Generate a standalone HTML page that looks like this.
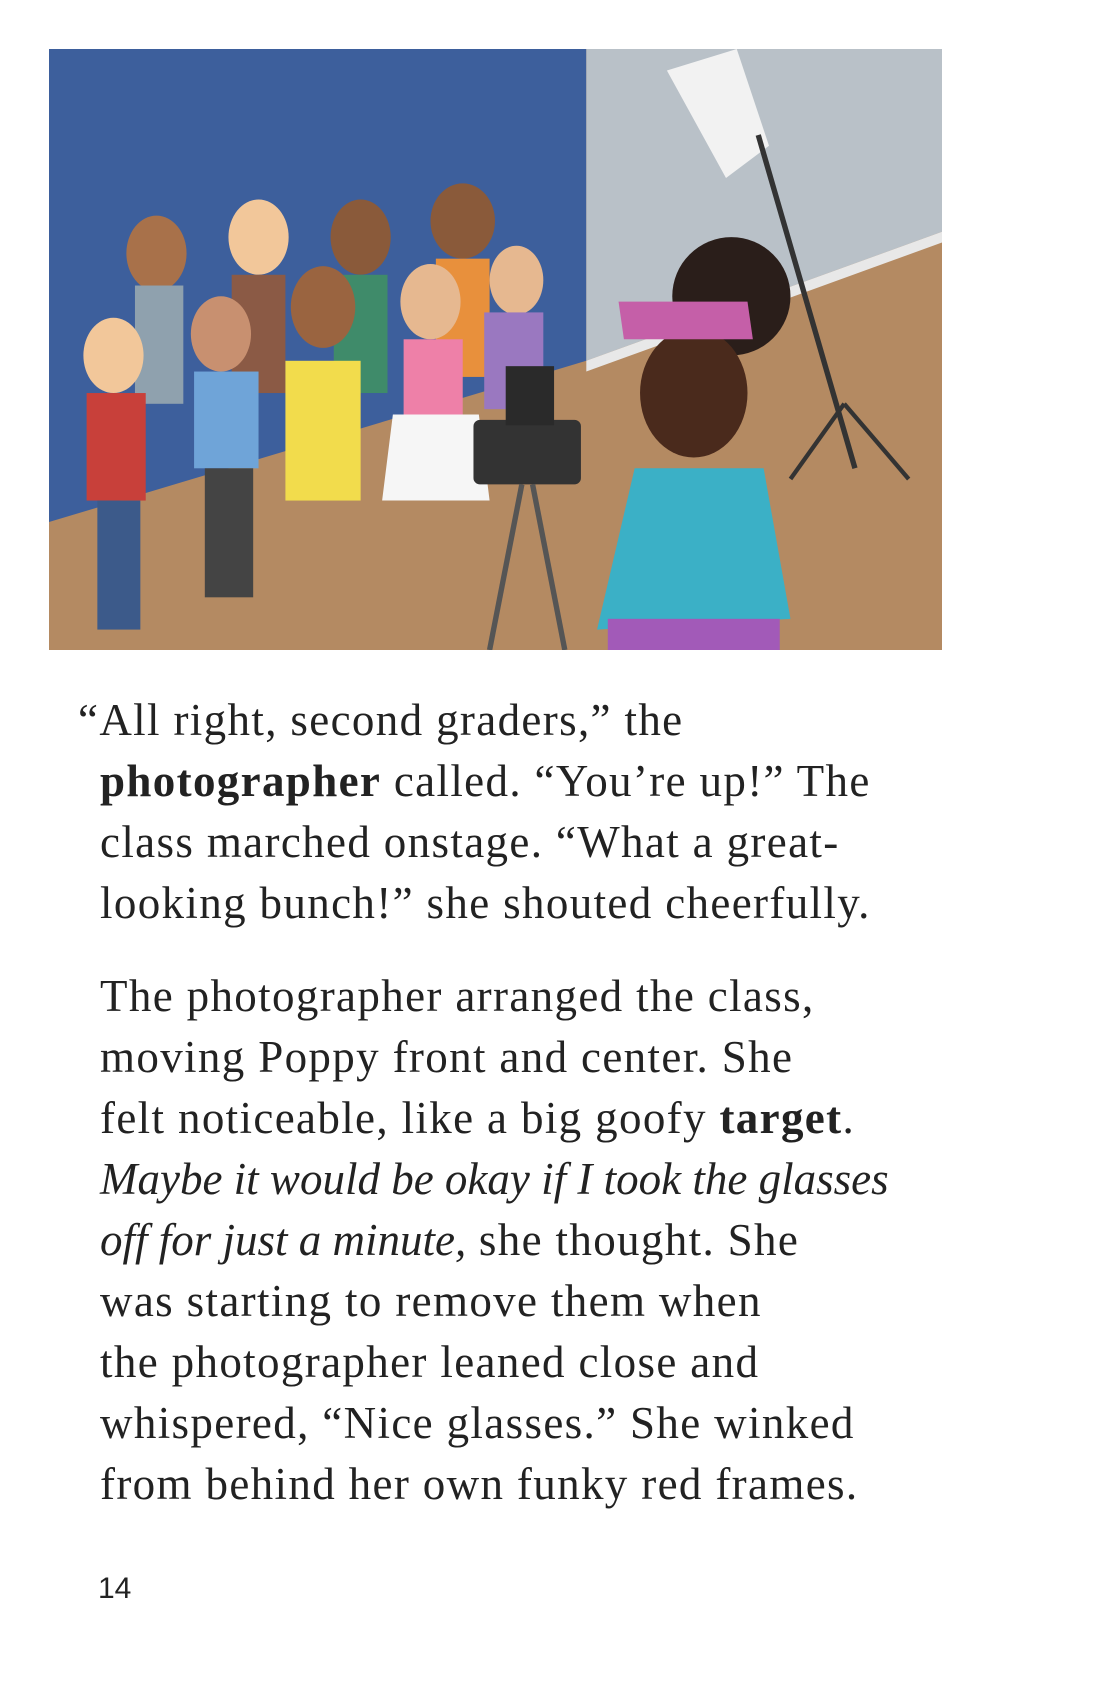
<!DOCTYPE html>
<html><head><meta charset="utf-8"><style>
body{margin:0;width:1100px;height:1700px;background:#fff;position:relative;overflow:hidden}
.ill{position:absolute;left:49px;top:49px;width:893px;height:601px}
.t{position:absolute;left:100px;font-family:"Liberation Serif",serif;font-size:45px;letter-spacing:1.35px;color:#222;line-height:60px;white-space:nowrap}
.t i{letter-spacing:0}
.n{position:absolute;left:98px;top:1572px;font-family:"Liberation Sans",sans-serif;font-size:30px;color:#222}
</style></head><body>
<svg class="ill" viewBox="0 0 831 559" preserveAspectRatio="none">
<rect width="831" height="559" fill="#b48a62"/>
<polygon points="0,0 500,0 500,290 0,440" fill="#3d5f9c"/>
<polygon points="500,0 831,0 831,170 500,290" fill="#b9c1c8"/>
<polygon points="500,290 831,170 831,180 500,300" fill="#e8e8e8"/>
<polygon points="575,20 640,0 670,90 630,120" fill="#f2f2f2"/>
<line x1="660" y1="80" x2="750" y2="390" stroke="#333" stroke-width="5"/>
<line x1="740" y1="330" x2="690" y2="400" stroke="#333" stroke-width="4"/>
<line x1="740" y1="330" x2="800" y2="400" stroke="#333" stroke-width="4"/>
<ellipse cx="100" cy="190" rx="28" ry="35" fill="#a8714a"/><rect x="80" y="220" width="45" height="110" fill="#8fa1ae"/>
<ellipse cx="195" cy="175" rx="28" ry="35" fill="#f2c79a"/><rect x="170" y="210" width="50" height="110" fill="#8b5a45"/>
<ellipse cx="290" cy="175" rx="28" ry="35" fill="#8a5a3a"/><rect x="265" y="210" width="50" height="110" fill="#3f8b6a"/>
<ellipse cx="385" cy="160" rx="30" ry="35" fill="#8a5a3a"/><rect x="360" y="195" width="50" height="110" fill="#e8903c"/>
<ellipse cx="60" cy="285" rx="28" ry="35" fill="#f2c79a"/><rect x="35" y="320" width="55" height="100" fill="#c8403a"/><rect x="45" y="420" width="40" height="120" fill="#3c5a8a"/>
<ellipse cx="160" cy="265" rx="28" ry="35" fill="#c89070"/><rect x="135" y="300" width="60" height="90" fill="#6fa4d8"/><rect x="145" y="390" width="45" height="120" fill="#444"/>
<ellipse cx="255" cy="240" rx="30" ry="38" fill="#9a6440"/><rect x="220" y="290" width="70" height="130" fill="#f2dc4c"/>
<ellipse cx="355" cy="235" rx="28" ry="35" fill="#e6b890"/><rect x="330" y="270" width="55" height="70" fill="#ee80a8"/><polygon points="320,340 400,340 410,420 310,420" fill="#f6f6f6"/>
<ellipse cx="435" cy="215" rx="25" ry="32" fill="#e6b890"/><rect x="405" y="245" width="55" height="90" fill="#9a78c0"/>
<rect x="395" y="345" width="100" height="60" rx="6" fill="#333"/><rect x="425" y="295" width="45" height="55" fill="#2a2a2a"/>
<line x1="440" y1="405" x2="410" y2="559" stroke="#555" stroke-width="5"/><line x1="450" y1="405" x2="480" y2="559" stroke="#555" stroke-width="5"/>
<circle cx="635" cy="230" r="55" fill="#2a1e1a"/>
<ellipse cx="600" cy="320" rx="50" ry="60" fill="#4a2a1c"/>
<polygon points="530,235 650,235 655,270 535,270" fill="#c55fa8"/>
<polygon points="545,390 665,390 690,530 510,540" fill="#3bb0c6"/>
<rect x="520" y="530" width="160" height="29" fill="#a25ab8"/>
</svg>
<div class="t" style="top:690px;left:78px">“All right, second graders,” the</div>
<div class="t" style="top:751px"><b>photographer</b> called. “You’re up!” The</div>
<div class="t" style="top:812px">class marched onstage. “What a great-</div>
<div class="t" style="top:873px">looking bunch!” she shouted cheerfully.</div>
<div class="t" style="top:966px">The photographer arranged the class,</div>
<div class="t" style="top:1027px">moving Poppy front and center. She</div>
<div class="t" style="top:1088px">felt noticeable, like a big goofy <b>target</b>.</div>
<div class="t" style="top:1149px"><i>Maybe it would be okay if I took the glasses</i></div>
<div class="t" style="top:1210px"><i>off for just a minute,</i> she thought. She</div>
<div class="t" style="top:1271px">was starting to remove them when</div>
<div class="t" style="top:1332px">the photographer leaned close and</div>
<div class="t" style="top:1393px">whispered, “Nice glasses.” She winked</div>
<div class="t" style="top:1454px">from behind her own funky red frames.</div>
<div class="n">14</div>
</body></html>
